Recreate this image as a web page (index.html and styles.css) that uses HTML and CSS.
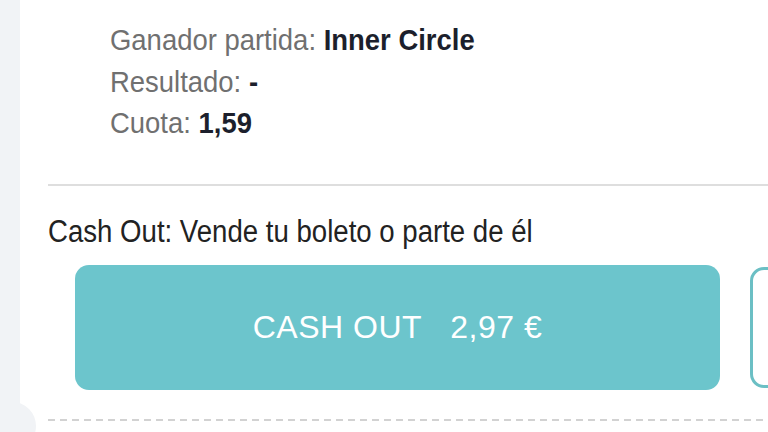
FILE: index.html
```html
<!DOCTYPE html>
<html lang="es">
<head>
  <meta charset="utf-8">
  <title>Cash Out</title>
  <link rel="stylesheet" href="styles.css">
</head>
<body>
  <div class="page">
    <div class="ticket">
      <div class="bet-info">
        <div class="row"><span class="label">Ganador partida:</span> <b>Inner Circle</b></div>
        <div class="row"><span class="label">Resultado:</span> <b>-</b></div>
        <div class="row"><span class="label">Cuota:</span> <b>1,59</b></div>
      </div>

      <hr class="divider">

      <div class="cashout">
        <p class="cashout-title">Cash Out: Vende tu boleto o parte de él</p>
        <div class="cashout-buttons">
          <button class="btn-cashout">CASH OUT&nbsp;&nbsp;&nbsp;2,97 €</button>
          <button class="btn-partial"></button>
        </div>
      </div>

      <div class="perforation"></div>
      <div class="notch"></div>
    </div>
  </div>
</body>
</html>
```

FILE: styles.css
```css
body {
  margin: 0;
  background: #f1f3f6;
  font-family: "Liberation Sans", Arial, sans-serif;
  overflow: hidden;
}

.page {
  padding-left: 20px;
  height: 432px;
}

.ticket {
  position: relative;
  background: #fff;
  height: 100%;
  padding-left: 28px;
  overflow: hidden;
}

/* the app font is a narrow one, squeeze Liberation Sans to match */
.bet-info {
  padding: 19px 0 0 62px;
  transform: scaleX(0.915);
  transform-origin: 62px 0;
}

.row {
  font-size: 30px;
  line-height: 41.5px;
  color: #1c1f2c;
  white-space: nowrap;
}
.row .label { color: #707070; }
.row b { font-weight: bold; }

.divider {
  border: 0;
  border-top: 2px solid #dedede;
  margin: 40px 0 0 0;
}

.cashout-title {
  margin: 28px 0 0 0;
  font-size: 31px;
  line-height: 36px;
  color: #222;
  white-space: nowrap;
  transform: scaleX(0.89);
  transform-origin: 0 0;
}

.cashout-buttons {
  display: flex;
  gap: 30px;
  margin: 15px 0 0 27px;
}

.btn-cashout {
  width: 645px;
  height: 125px;
  flex: none;
  border: 0;
  border-radius: 14px;
  background: #6cc5cc;
  color: #fff;
  font-family: "Liberation Sans", Arial, sans-serif;
  font-size: 32px;
  letter-spacing: 0.5px;
  padding: 0;
}

.btn-partial {
  width: 120px;
  height: 121px;
  flex: none;
  margin-top: 2px;
  border: 3px solid #6bbfc4;
  border-radius: 14px;
  background: #fff;
}

.perforation {
  margin-top: 29px;
  height: 2px;
  background: repeating-linear-gradient(90deg, #d2d2d2 0 7px, transparent 7px 12px);
}

.notch {
  position: absolute;
  left: -32px;
  bottom: -18px;
  width: 48px;
  height: 48px;
  border-radius: 50%;
  background: #f1f3f6;
}
```
